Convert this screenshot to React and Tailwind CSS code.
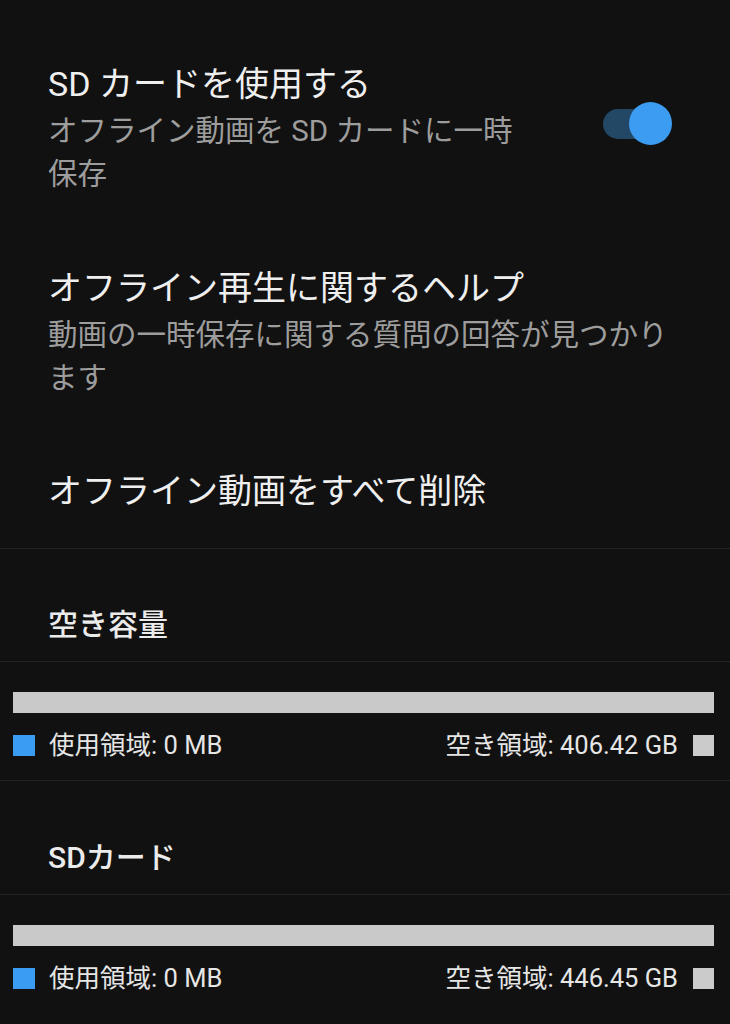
import React from "react";

const font = { fontFamily: "Roboto, 'Noto Sans CJK JP', sans-serif" };

function Storage({ title, free }) {
  return (
    <div>
      <div className="mt-[56px] pl-[48px] text-[30px] leading-[40px] font-medium text-[#ebebeb]">
        {title}
      </div>
      <div className="mt-[16px] h-px bg-[#232323]" />
      <div className="mt-[30px] ml-[13px] mr-[16px] h-[21px] bg-[#c9c9c9]" />
      <div className="mt-[22px] ml-[13px] mr-[16px] flex h-[21px] items-center justify-between text-[25.5px] leading-none text-[#e6e6e6]">
        <div className="flex items-center">
          <div className="h-[21px] w-[22px] bg-[#3a9cf2]" />
          <span className="ml-[14px]">使用領域: 0 MB</span>
        </div>
        <div className="flex items-center">
          <span className="mr-[15px]">空き領域: {free}</span>
          <div className="h-[21px] w-[21px] bg-[#cbcbcb]" />
        </div>
      </div>
    </div>
  );
}

export default function App() {
  return (
    <div className="min-h-[1024px] w-full bg-[#111111] pb-10" style={font}>
      <div className="pt-[62px] pl-[48px] flex items-start">
        <div className="w-[480px] shrink-0">
          <div className="text-[34px] leading-[44px] text-[#efefef]">SD カードを使用する</div>
          <div className="mt-1 text-[29.5px] leading-[43px] text-[#9d9d9d]">
            オフライン動画を SD カードに一時保存
          </div>
        </div>
        <div className="relative ml-[75px] mt-[40px] h-[43px] w-[69px] shrink-0">
          <div className="absolute left-0 top-[7px] h-[30px] w-[56px] rounded-full bg-[#234866]" />
          <div className="absolute left-[26px] top-0 h-[43px] w-[43px] rounded-full bg-[#3b9cf1]" />
        </div>
      </div>

      <div className="mt-[70px] pl-[48px] pr-[48px]">
        <div className="text-[34px] leading-[44px] text-[#efefef]">オフライン再生に関するヘルプ</div>
        <div className="mt-1 text-[29.5px] leading-[43px] text-[#9d9d9d]">
          動画の一時保存に関する質問の回答が見つかります
        </div>
      </div>

      <div className="mt-[69px] pl-[48px]">
        <div className="text-[34px] leading-[44px] text-[#efefef]">オフライン動画をすべて削除</div>
      </div>

      <div className="mt-[35px] h-px bg-[#232323]" />

      <Storage title="空き容量" free="406.42 GB" />
      <div className="mt-[24px] h-px bg-[#232323]" />
      <div className="pt-[1px]">
        <Storage title="SDカード" free="446.45 GB" />
      </div>
    </div>
  );
}
